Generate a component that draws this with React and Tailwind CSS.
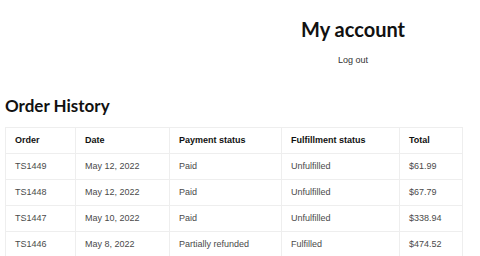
const orders = [
  { id: "TS1449", date: "May 12, 2022", payment: "Paid", fulfillment: "Unfulfilled", total: "$61.99" },
  { id: "TS1448", date: "May 12, 2022", payment: "Paid", fulfillment: "Unfulfilled", total: "$67.79" },
  { id: "TS1447", date: "May 10, 2022", payment: "Paid", fulfillment: "Unfulfilled", total: "$338.94" },
  { id: "TS1446", date: "May 8, 2022", payment: "Partially refunded", fulfillment: "Fulfilled", total: "$474.52" },
];

const cols = [
  { label: "Order", w: "w-[70px]" },
  { label: "Date", w: "w-[94px]" },
  { label: "Payment status", w: "w-[112px]" },
  { label: "Fulfillment status", w: "w-[118px]" },
  { label: "Total", w: "w-[63px]" },
];

export default function App() {
  return (
    <div className="w-[480px] h-[256px] overflow-hidden bg-white font-['Liberation_Sans',Arial,sans-serif] text-[#222]">
      <div className="flex flex-col items-center ml-[226px] w-[254px] pt-[17px]">
        <h1 className="font-['Lato',sans-serif] font-bold text-[20px] leading-[24px] text-[#111]">My account</h1>
        <button className="mt-[13px] text-[9px] leading-[12px] text-[#333]">Log out</button>
      </div>

      <div className="px-[5px] pt-[30px]">
        <h2 className="font-['Lato',sans-serif] font-bold text-[17px] leading-[20px] text-[#111] mb-[11px]">Order History</h2>
        <table className="border-collapse text-[9px] text-left">
          <thead>
            <tr className="h-[26px]">
              {cols.map(c => (
                <th key={c.label} className={`${c.w} border border-[#eeeeee] px-[9px] font-bold text-[#111]`}>{c.label}</th>
              ))}
            </tr>
          </thead>
          <tbody>
            {orders.map(o => (
              <tr key={o.id} className="h-[26px] text-[#4a4a4a]">
                <td className="border border-[#eeeeee] px-[9px]">{o.id}</td>
                <td className="border border-[#eeeeee] px-[9px]">{o.date}</td>
                <td className="border border-[#eeeeee] px-[9px]">{o.payment}</td>
                <td className="border border-[#eeeeee] px-[9px]">{o.fulfillment}</td>
                <td className="border border-[#eeeeee] px-[9px]">{o.total}</td>
              </tr>
            ))}
          </tbody>
        </table>
      </div>
    </div>
  );
}
